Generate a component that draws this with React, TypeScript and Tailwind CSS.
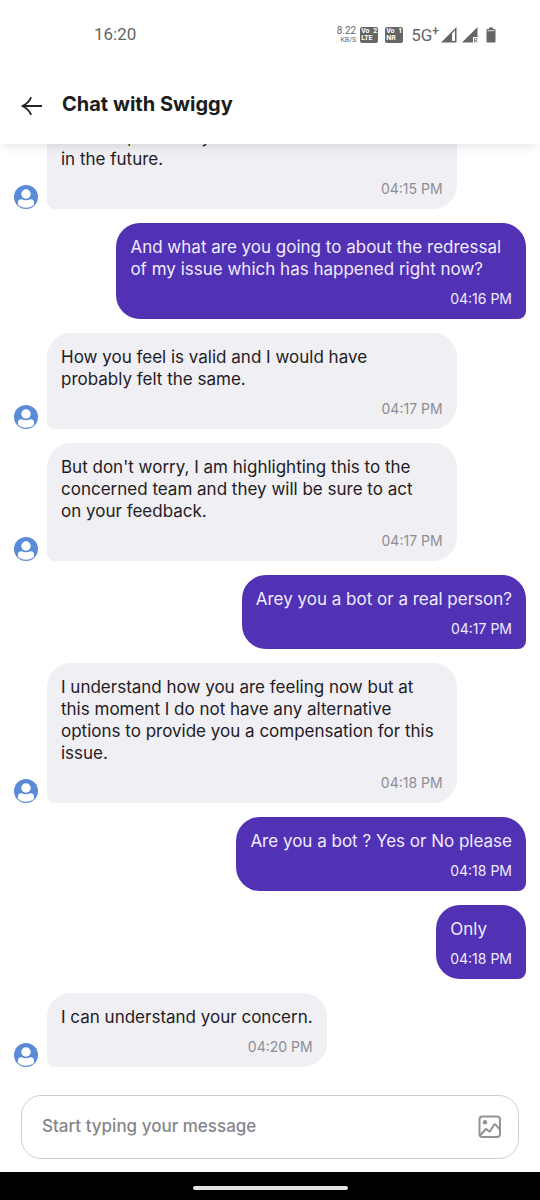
type Message = {
  id: number;
  from: 'agent' | 'user';
  text: string;
  time: string;
  wide?: boolean;
};

const messages: Message[] = [
  { id: 1, from: 'agent', text: 'concern, definitely\nin the future.', time: '04:15 PM', wide: true },
  {
    id: 2,
    from: 'user',
    text: 'And what are you going to about the redressal\nof my issue which has happened right now?',
    time: '04:16 PM',
    wide: true,
  },
  {
    id: 3,
    from: 'agent',
    text: 'How you feel is valid and I would have\nprobably felt the same.',
    time: '04:17 PM',
    wide: true,
  },
  {
    id: 4,
    from: 'agent',
    text: "But don't worry, I am highlighting this to the\nconcerned team and they will be sure to act\non your feedback.",
    time: '04:17 PM',
    wide: true,
  },
  { id: 5, from: 'user', text: 'Arey you a bot or a real person?', time: '04:17 PM' },
  {
    id: 6,
    from: 'agent',
    text: 'I understand how you are feeling now but at\nthis moment I do not have any alternative\noptions to provide you a compensation for this\nissue.',
    time: '04:18 PM',
    wide: true,
  },
  { id: 7, from: 'user', text: 'Are you a bot ? Yes or No please', time: '04:18 PM' },
  { id: 8, from: 'user', text: 'Only', time: '04:18 PM' },
  { id: 9, from: 'agent', text: 'I can understand your concern.', time: '04:20 PM' },
];

function Avatar() {
  return (
    <svg viewBox="0 0 24 24" className="h-6 w-6 shrink-0" aria-hidden>
      <circle cx="12" cy="12" r="12" fill="#5b8ad6" />
      <circle cx="12" cy="9" r="4.7" fill="#fff" />
      <path d="M4 19.8V17.200c0-1.900 1.300-3 3.200-3h.6c1.200 .7 2.600 1.100 4.200 1.100s3-.4 4.200-1.100h.6c1.900 0 3.200 1.100 3.200 3v2.600c-2 1.900-4.800 3-8 3s-6-1.100-8-3z" fill="#fff" />
    </svg>
  );
}

function VoBadge({ sim, net }: { sim: string; net: string }) {
  return (
    <div className="flex h-4 w-[18px] flex-col justify-center rounded-xs bg-[#666] px-px text-[7px] leading-[7px] font-bold text-white">
      <div className="flex justify-between">
        <span>Vo</span>
        <span>{sim}</span>
      </div>
      <span>{net}</span>
    </div>
  );
}

function StatusBar() {
  return (
    <div className="flex h-[70px] items-center justify-between pr-11 pl-[94px] font-['Roboto',sans-serif] text-[#666]">
      <span className="text-[17px]">16:20</span>
      <div className="flex items-center">
        <div className="mr-1 flex flex-col items-end">
          <span className="text-[10px] leading-[10px]">8.22</span>
          <span className="text-[7px] leading-[8px]">KB/S</span>
        </div>
        <VoBadge sim="2" net="LTE" />
        <div className="w-[7px]" />
        <VoBadge sim="1" net="NR" />
        <div className="ml-2 flex items-start">
          <span className="text-[17px] leading-5">5G</span>
          <span className="text-xs leading-3 font-medium">+</span>
        </div>
        <svg viewBox="0 0 16 16" className="ml-0.5 h-4 w-4" aria-hidden>
          <path d="M0 15.500 15.500 0v15.500z" fill="#666" />
          <path d="M11 6.500 14 3.500v10.500h-3z" fill="#fff" />
        </svg>
        <svg viewBox="0 0 16 16" className="ml-[5px] h-4 w-4" aria-hidden>
          <path d="M0 15.500 15.500 0v10H11v5.500z" fill="#666" />
          <path d="M12.500 15.500v-4h1.500a1.100 1.100 0 0 1 0 2.200h-1.500M14 13.700l1.300 1.800" fill="none" stroke="#666" strokeWidth=".8" />
        </svg>
        <svg viewBox="0 0 10 16" className="ml-2 h-4 w-2.5" aria-hidden>
          <path d="M3 .5h4V2h1.500c.6 0 1 .4 1 1v11.500c0 .6-.4 1-1 1h-7c-.6 0-1-.4-1-1V3c0-.6.4-1 1-1H3z" fill="#666" />
          <path d="M1.500 3.700h7" stroke="#fff" strokeWidth=".8" />
        </svg>
      </div>
    </div>
  );
}

function Bubble({ message }: { message: Message }) {
  const mine = message.from === 'user';

  return (
    <li className={mine ? 'flex justify-end' : 'flex items-end gap-[9px]'}>
      {!mine && <Avatar />}
      <div
        className={[
          'flex max-w-4/5 shrink-0 flex-col rounded-3xl px-3.5 pt-[13px] pb-2.5',
          message.wide ? 'w-4/5' : '',
          mine ? 'rounded-br-lg bg-[#5132b4] text-[#efeaff]' : 'rounded-bl-lg bg-[#f0eff4] text-[#1f2025]',
        ].join(' ')}
      >
        <p className="text-[17px] leading-[22px] whitespace-pre">{message.text}</p>
        <time className={`mt-[9px] self-end text-sm leading-5 ${mine ? 'text-[#efeaff]' : 'text-[#8e8e94]'}`}>
          {message.time}
        </time>
      </div>
    </li>
  );
}

export default function App() {
  return (
    <div className="flex h-screen flex-col overflow-hidden bg-white font-['Inter',sans-serif]">
      <header className="relative z-10 shrink-0 bg-white shadow-[0_6px_10px_-4px_rgba(0,0,0,0.12)]">
        <StatusBar />
        <div className="flex h-[74px] items-start gap-5 px-5 pt-[22px]">
          <button type="button" aria-label="Back" className="flex h-7 items-center">
            <svg viewBox="0 0 22 20" className="h-5 w-[22px]" fill="none" stroke="#222327" strokeWidth="1.8" strokeLinecap="round" strokeLinejoin="round" aria-hidden>
              <path d="M21.300 10H2.500M10.800 1.800C9.500 5 6 8.200 2.300 10c3.700 1.800 7.200 5 8.500 8.200" />
            </svg>
          </button>
          <h1 className="text-xl leading-6 font-bold text-[#1b1c20]">Chat with Swiggy</h1>
        </div>
      </header>

      <main className="flex min-h-0 flex-1 flex-col justify-end overflow-hidden px-3.5 pb-7">
        <ul className="flex flex-col gap-3.5">
          {messages.map((message) => (
            <Bubble key={message.id} message={message} />
          ))}
        </ul>
      </main>

      <form className="mx-[21px] mb-[13px] flex h-16 shrink-0 items-center rounded-[20px] border border-[#cfcfd2] pr-4 pl-5">
        <input
          type="text"
          aria-label="Message"
          placeholder="Start typing your message"
          className="min-w-0 flex-1 pb-0.5 text-[17px] leading-6 font-medium outline-none placeholder:text-[#85868c]"
        />
        <button type="button" aria-label="Attach image">
          <svg viewBox="0 0 24 24" className="h-6 w-6" fill="none" stroke="#939396" strokeWidth="2" strokeLinejoin="round" aria-hidden>
            <rect x="1.500" y="1.500" width="20.500" height="20.500" rx="3" />
            <path d="M2 20.500 7.500 14.500c.5-.5 1-.5 1.500 0l1.800 1.800c.5.500 1 .4 1.300-.2l3.900-6.300c.4-.7 1-.7 1.500-.1l4.300 4.800" />
            <circle cx="7" cy="7.300" r="2.200" fill="#939396" stroke="none" />
          </svg>
        </button>
      </form>

      <footer className="flex h-7 shrink-0 items-center justify-center bg-black pt-1">
        <div className="h-1 w-[155px] rounded-full bg-[#e4e4e4]" />
      </footer>
    </div>
  );
}
